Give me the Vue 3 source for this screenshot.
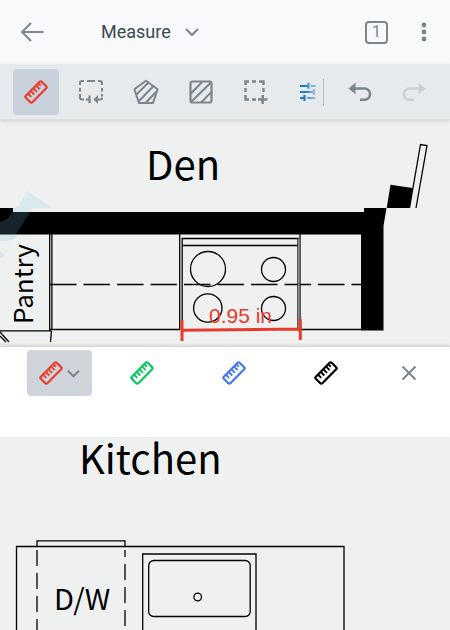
<script setup>
import { ref } from 'vue'

const tools = ['ruler', 'callout', 'polygon', 'area', 'select']
const labels = {
  ruler: 'Ruler',
  callout: 'Perimeter',
  polygon: 'Polygon area',
  area: 'Rectangle area',
  select: 'Multi select',
}
const activeTool = ref('ruler')
const presets = ['green', 'blue', 'black']
</script>

<template>
  <div class="viewer">
    <svg class="defs" aria-hidden="true">
      <symbol id="ruler" viewBox="0 0 24 24">
        <g transform="rotate(-45 12 12)" fill="none" stroke="currentColor" stroke-width="2.200">
          <rect x="0.8" y="7.4" width="22.4" height="9.2" rx="1.4" />
          <path d="M5.2 8v4M9 8v4.600M12.800 8v4.600M16.600 8v4.600M19.800 8v3" stroke-width="1.900" />
        </g>
      </symbol>
      <symbol id="callout" viewBox="0 0 24 24">
        <path d="M1 5V3.200Q1 1 3.200 1H5M8 1h8M19 1h1.800Q23 1 23 3.200V5M1 8v3.500M1 14v3.500Q1 19.500 3.200 19.500H5M23 8v3.500M23 14v2.500" fill="none" stroke="currentColor" stroke-width="2" />
        <path d="M7 19.500h4M10.500 15.500v7.500M17 19.500h4.500q1.500 0 1.500-2" fill="none" stroke="currentColor" stroke-width="2.200" />
        <path d="M14.500 19.500l4.500-4.500v9z" fill="currentColor" />
      </symbol>
      <symbol id="polygon" viewBox="0 0 26 26">
        <path d="M13 1.800L24.600 10.300L20 24H6L1.400 10.300ZM3.500 15.500L15.500 3.500M6 22L20 7.500M13 23.500L23 13" fill="none" stroke="currentColor" stroke-width="2" stroke-linejoin="round" />
      </symbol>
      <symbol id="area" viewBox="0 0 24 24">
        <rect x="1.500" y="1.500" width="21" height="21" rx="2" fill="none" stroke="currentColor" stroke-width="2.200" />
        <path d="M2 13.500L13 2M2 22L22 2.500M12 22.500L22.500 12" fill="none" stroke="currentColor" stroke-width="2" />
      </symbol>
      <symbol id="select" viewBox="0 0 24 24">
        <path d="M1.500 5V1.500H5M8 1.500h4M15 1.500h4.500V5M1.500 8v4M1.500 15v4.500H5M8 19.500h4M19.500 8v4M14 19.500h9.500M18.700 15v9" fill="none" stroke="currentColor" stroke-width="2.400" />
      </symbol>
      <symbol id="chevron" viewBox="0 0 14 14">
        <path d="M1 4l6 6 6-6" fill="none" stroke="currentColor" stroke-width="2.200" />
      </symbol>
    </svg>

    <header class="header">
      <button class="plain back" type="button" aria-label="Back">
        <svg width="24" height="24" viewBox="0 0 24 24">
          <path d="M23.500 12H2M11 3L2 12l9 9" fill="none" stroke="currentColor" stroke-width="2" />
        </svg>
      </button>
      <button class="plain mode" type="button">
        <span>Measure</span>
        <svg width="14" height="14"><use href="#chevron" /></svg>
      </button>
      <div class="header-end">
        <button class="plain tabs" type="button">1</button>
        <button class="plain more" type="button" aria-label="More options">
          <svg width="6" height="20" viewBox="0 0 6 20" fill="currentColor">
            <circle cx="3" cy="3" r="2.400" />
            <circle cx="3" cy="10" r="2.400" />
            <circle cx="3" cy="17" r="2.400" />
          </svg>
        </button>
      </div>
    </header>

    <nav class="toolbar">
      <div class="tools">
        <button
          v-for="tool in tools"
          :key="tool"
          class="plain tool"
          :class="{ active: tool === activeTool }"
          type="button"
          :aria-label="labels[tool]"
          @click="activeTool = tool"
        >
          <svg :class="tool"><use :href="'#' + tool" /></svg>
        </button>
        <button class="plain adjust" type="button" aria-label="Customize">
          <svg width="18" height="20" viewBox="0 0 18 20">
            <defs>
              <linearGradient id="fade" gradientUnits="userSpaceOnUse" x1="6" y1="0" x2="19" y2="0">
                <stop offset="0" stop-color="#2079c4" />
                <stop offset="1" stop-color="#2079c4" stop-opacity=".2" />
              </linearGradient>
            </defs>
            <path d="M1 4h9M12 4h5M9.500 .8v6M1 10h11.500M15 7v6M12 10h3M1 16h5M5.500 13v6M8.500 16h8" fill="none" stroke="url(#fade)" stroke-width="2.200" />
          </svg>
        </button>
      </div>
      <div class="history">
        <button class="plain tool" type="button" aria-label="Undo">
          <svg width="24" height="20" viewBox="0 0 24 20">
            <path d="M6 6.500h10.500a5.600 5.600 0 0 1 0 11.200H12" fill="none" stroke="currentColor" stroke-width="2.600" />
            <path d="M.5 6.500L7.500 .8v11.400z" fill="currentColor" />
          </svg>
        </button>
        <button class="plain tool" type="button" aria-label="Redo" disabled>
          <svg width="24" height="20" viewBox="0 0 24 20">
            <path d="M18 6.500H7.500a5.600 5.600 0 0 0 0 11.200H12" fill="none" stroke="currentColor" stroke-width="2.600" />
            <path d="M23.500 6.500L16.500 .8v11.400z" fill="currentColor" />
          </svg>
        </button>
      </div>
    </nav>

    <main>
      <svg class="plan" viewBox="0 120 450 226" role="img" aria-label="Floor plan, den and pantry">
        <path d="M0 208H13V212H364V208H386.500L383.500 226V330.500H361V234.500H0Z" />
        <path d="M390.500 184.800L412.500 188L409.500 208H386.700Z" />
        <path d="M27.500 191L53 208H33L16 234H0V222Q10 220 14 208L18 207Z" fill="#7cc8e8" opacity=".18" />
        <path d="M0 235H18Q13 242 0 241ZM0 252L5 255L0 258Z" fill="#7cc8e8" opacity=".22" />
        <g class="ink">
          <path d="M409.500 208L420.500 144.500L427 145.500L416 208" />
          <path d="M49.700 234V331M51.900 234V330M0 330.800H51M50 329.500H180M51.500 331L50.500 342M0 332L9 342M0 336L6 342" />
          <path d="M179.700 234V329.500M182.200 330V238.500H298V330M182 245.500H298M300 234V329.500H361" />
          <path d="M50 284.500H362" stroke-dasharray="26.500 7" />
          <circle cx="208" cy="269" r="17.500" />
          <circle cx="273.500" cy="269.500" r="12" />
          <circle cx="207.800" cy="308" r="14.200" />
          <circle cx="273.500" cy="308.500" r="12" />
        </g>
        <path d="M298.800 239V329" stroke="#8c9296" stroke-width="1.500" />
        <text class="room" x="146" y="180">Den</text>
        <text class="pantry" transform="translate(33 324) rotate(-90)">Pantry</text>
        <g class="measure">
          <path d="M182 330.300L300 329M182 320V341M300.300 319V340" />
          <text x="209" y="323">0.95 in</text>
        </g>
      </svg>

      <section class="presets" aria-label="Ruler presets">
        <button class="plain preset selected" type="button" aria-label="Red ruler">
          <svg class="ruler red"><use href="#ruler" /></svg>
          <svg width="13" height="13"><use href="#chevron" /></svg>
        </button>
        <div class="colors">
          <button v-for="color in presets" :key="color" class="plain preset" type="button" :aria-label="color + ' ruler'">
            <svg class="ruler" :class="color"><use href="#ruler" /></svg>
          </button>
        </div>
        <button class="plain preset close" type="button" aria-label="Close">
          <svg width="16" height="16" viewBox="0 0 16 16">
            <path d="M1.500 1.500l13 13M14.500 1.500l-13 13" fill="none" stroke="currentColor" stroke-width="2" />
          </svg>
        </button>
      </section>

      <svg class="plan" viewBox="0 437 450 193" role="img" aria-label="Floor plan, kitchen">
        <g class="ink">
          <path d="M16.500 630V546.500H344V630M37 547V540.800H125V547M142.700 630V554H256V630" />
          <path d="M37 550V630" stroke-dasharray="16 7" />
          <path d="M125 550V630" stroke-dasharray="16 7" stroke-dashoffset="9" />
          <rect x="148.700" y="560.500" width="101.500" height="56" rx="5" />
          <circle cx="197.700" cy="597" r="3.800" />
        </g>
        <text class="room" x="79" y="474">Kitchen</text>
        <text class="appliance" x="54" y="610">D/W</text>
      </svg>
    </main>
  </div>
</template>

<style>
body {
  margin: 0;
  background: #eff1f1;
}
</style>

<style scoped>
.viewer {
  font-family: Roboto, sans-serif;
  color: #7b858d;
  background: #eff1f1;
}
.defs {
  position: absolute;
  width: 0;
  height: 0;
}
.plain {
  display: flex;
  align-items: center;
  justify-content: center;
  padding: 0;
  border: 0;
  background: none;
  color: inherit;
  font: inherit;
}
.header {
  display: flex;
  align-items: center;
  height: 64px;
  padding: 0 23px 0 20px;
  background: #f8f9fb;
}
.mode {
  gap: 14px;
  margin-left: 57px;
  font-size: 18px;
  line-height: 24px;
}
.mode span {
  color: #394850;
}
.header-end {
  display: flex;
  align-items: center;
  gap: 33px;
  margin-left: auto;
}
.tabs {
  box-sizing: border-box;
  width: 23px;
  height: 23px;
  border: 2px solid #7b858d;
  border-radius: 4px;
  font-size: 16px;
  line-height: 20px;
}
.more {
  width: 6px;
}
.toolbar {
  position: relative;
  display: flex;
  justify-content: space-between;
  box-sizing: border-box;
  height: 56px;
  padding: 5px 13px;
  background: #e6eaed;
  border-bottom: 1px solid #d9dcde;
  box-shadow: 0 1px 4px rgba(0, 0, 0, 0.12);
}
.tools {
  display: flex;
  align-items: center;
  gap: 9px;
  height: 46px;
}
.history {
  display: flex;
  gap: 8px;
}
.tool {
  width: 46px;
  height: 46px;
  border-radius: 4px;
}
.tool.active {
  background: #c8d1dc;
}
.tool:disabled {
  color: #cbd0d5;
}
.ruler,
.callout,
.area,
.select {
  width: 24px;
  height: 24px;
}
.callout {
  overflow: visible;
}
.tool .ruler,
.red {
  color: #eb3b2e;
}
.polygon {
  width: 26px;
  height: 26px;
}
.adjust {
  justify-content: flex-end;
  width: 36px;
  height: 27px;
  padding-right: 6px;
  border-right: 1px solid #b2bacb;
}
.plan {
  display: block;
  width: 100%;
  height: auto;
  overflow: visible;
}
.ink {
  fill: none;
  stroke: #000;
  stroke-width: 1.3px;
}
.plan text {
  font-family: "Noto Sans CJK SC", "Noto Sans", sans-serif;
}
.plan .room {
  font-size: 40px;
}
.plan .pantry {
  font-size: 26px;
}
.plan .appliance {
  font-size: 29px;
}
.measure path {
  fill: none;
  stroke: #e53b2c;
  stroke-width: 3px;
}
.plan .measure text {
  fill: #e53b2c;
  font-family: "Liberation Sans", Arial, sans-serif;
  font-size: 21px;
}
.presets {
  position: relative;
  display: flex;
  align-items: flex-start;
  justify-content: space-between;
  padding: 3px 18px 41px 27px;
  background: #fff;
  border-top: 1px solid #d4d6d8;
  box-shadow: 0 -1px 3px rgba(0, 0, 0, 0.12);
}
.colors {
  display: flex;
  gap: 46px;
  margin-right: 10px;
}
.preset {
  width: 46px;
  height: 46px;
  border-radius: 4px;
}
.selected {
  gap: 4px;
  width: 65px;
  background: #ced4da;
}
.green {
  color: #08c85c;
}
.blue {
  color: #4477ee;
}
.black {
  color: #000;
}
</style>
